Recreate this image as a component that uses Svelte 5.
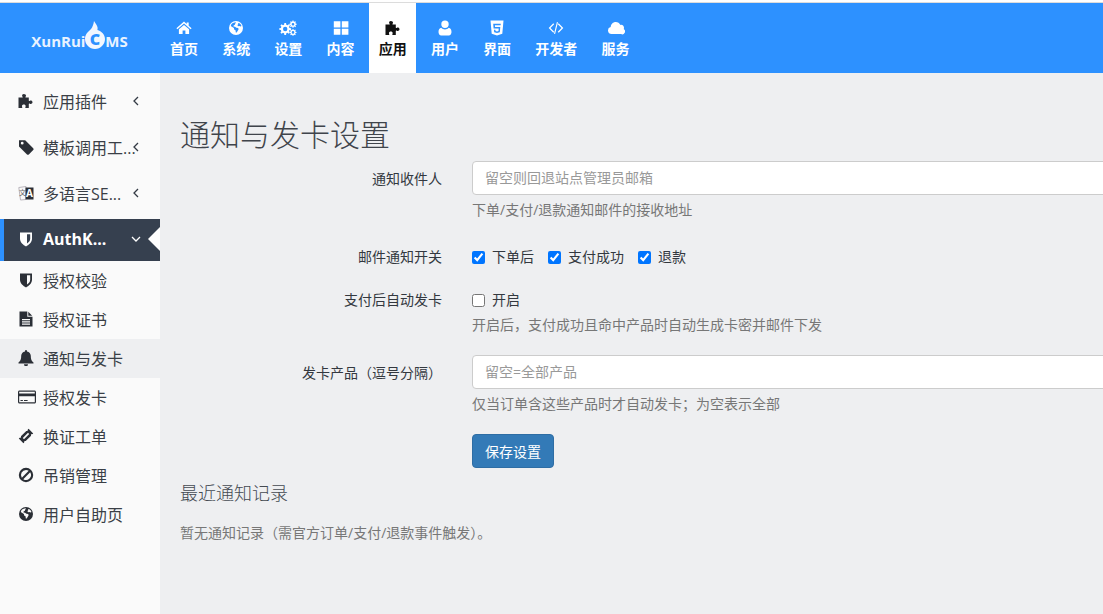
<script lang="ts">
  // builds a gear outline with a round hole, used for the settings icon
  function gear(cx: number, cy: number, r: number, teeth: number, hole: number) {
    let d = ''
    const step = (Math.PI * 2) / teeth
    for (let i = 0; i < teeth; i++) {
      const a = i * step
      const pts = [
        [a - step * 0.32, r * 0.74],
        [a - step * 0.18, r],
        [a + step * 0.18, r],
        [a + step * 0.32, r * 0.74],
      ]
      for (const [t, l] of pts) {
        d += `${i === 0 && t === pts[0][0] ? 'M' : 'L'}${(cx + Math.cos(t) * l).toFixed(2)} ${(cy + Math.sin(t) * l).toFixed(2)}`
      }
    }
    d += `Z M${cx - hole} ${cy}a${hole} ${hole} 0 1 0 ${hole * 2} 0a${hole} ${hole} 0 1 0 ${-hole * 2} 0Z`
    return d
  }

  const icons: Record<string, string> = {
    home: 'M8 1.600 .4 8.200l1 1.100L8 3.600l6.600 5.700 1-1.100-2.900-2.500V2.400h-2v1.700ZM8 4.900 2.900 9.300V14H6.600v-3.400h2.800V14h3.700V9.300Z',
    globe: 'M8 1a7 7 0 1 0 0 14A7 7 0 0 0 8 1ZM4 3.600c1-.8 2.200-1.200 3.400-1.300l.7.8-1 .5-.2 1.200-1.300.6-.1 1.200 1.500.2 1.400.9 1.800.2.4 1.400-1 1.700-.9 1.600-.9-.2-.3-2.100-1.400-.9-.2-1.500L3.100 6.300 2.800 6C3 5 3.400 4.200 4 3.600ZM10.200 3l1.700.5c.8.7 1.300 1.600 1.600 2.600l-.9.4-1.300-.5-1.100.3-.9-1.200.8-.6Z',
    cogs: gear(6.2, 9, 6, 8, 2.200) + gear(14, 4.200, 3.700, 8, 1.300) + gear(14, 12.400, 3.500, 8, 1.300),
    grid: 'M.8 1.200h6.600v6.300H.8ZM8.800 1.200h6.600v6.300H8.800ZM.8 8.800h6.600v6H.8ZM8.800 8.800h6.600v6H8.800Z',
    puzzle: 'M5.800 1c1.400 0 2.200.8 2.200 1.700 0 .7-.6 1-.6 1.500 0 .3.3.4 1 .4h2.400v2.700c0 .6.2.8.5.8.5 0 .7-.5 1.400-.5.9 0 1.800.7 1.800 1.700s-.9 1.700-1.800 1.700c-.7 0-.9-.5-1.400-.5-.3 0-.5.2-.5.8V15H8c-.5 0-.7-.3-.7-.6 0-.5.4-.7.4-1.300 0-.9-.9-1.500-1.900-1.500s-1.900.6-1.900 1.500c0 .6.4.8.4 1.300 0 .3-.2.600-.7.600H.5V4.600h3.300c.7 0 1-.1 1-.4 0-.5-.7-.8-.7-1.500C4.100 1.800 4.600 1 5.800 1Z',
    user: 'M8 .6a3.700 3.700 0 1 1 0 7.400A3.700 3.700 0 0 1 8 .6ZM4.300 7.700C5.200 8.800 6.500 9.400 8 9.400s2.800-.6 3.700-1.700c1.700.2 2.800 1.700 2.800 4.300 0 1.900-1.100 3.400-2.700 3.400H4.200C2.600 15.400 1.500 13.900 1.500 12c0-2.600 1.100-4.100 2.800-4.300Z',
    html5: 'M1.500.6h13l-1.200 13.200L8 15.600l-5.300-1.800ZM11.800 3.700H4.200l.4 4.800h5.100l-.2 2.400L8 11.400l-1.500-.5-.1-1.200H5l.2 2.500L8 13l2.800-.8.5-5.100H6l-.1-1.900h5.700Z',
    code: 'M5.300 3.300 6.200 4.200 2.500 8l3.700 3.800-.9.9L.7 8ZM10.700 3.300 15.300 8l-4.600 4.700-.9-.9L13.500 8 9.800 4.200ZM8.900 2l1.100.3L7.100 14 6 13.700Z',
    cloud: 'M3.600 14a3.500 3.500 0 0 1-.9-6.900C2.800 4.200 5 2 7.800 2c2 0 3.800 1.100 4.500 2.900.3-.1.6-.1.800-.1 1.900 0 2.900 1.500 2.900 3 0 .5-.1.900-.3 1.300A2.800 2.800 0 0 1 13 14Z',
    tag: 'M1 1.200h6.200l8 8c.5.5.5 1.300 0 1.800l-4.400 4.400c-.5.5-1.300.5-1.800 0l-8-8ZM4.200 2.800a1.400 1.400 0 1 0 0 2.800 1.400 1.400 0 0 0 0-2.800Z',
    shield: 'M2 1.500h12v6.300c0 3.700-3.400 6.200-6 7.700-2.600-1.500-6-4-6-7.700ZM9 3.200v9.400c1.700-1.100 3.200-2.800 3.200-4.800V3.200Z',
    file: 'M1.500.5h7.800v5.200h5.200V15.500h-13ZM10.300.8l3.900 3.900h-3.900ZM4 8v1.300h8V8Zm0 2.300v1.300h8v-1.300Zm0 2.200v1.300h8v-1.300Z',
    bell: 'M8 0a1 1 0 0 1 1 1v.4c2.300.4 3.800 2.300 3.800 4.400 0 4.400 1.300 5.500 2.700 6.700v.9H.5v-.9c1.400-1.200 2.700-2.300 2.700-6.700 0-2.100 1.500-4 3.800-4.400V1a1 1 0 0 1 1-1ZM6 14.300h4a2 2 0 0 1-4 0Z',
    card: 'M1.500 1.500h15c.8 0 1.500.7 1.500 1.500v10c0 .8-.7 1.500-1.500 1.500h-15C.7 14.500 0 13.800 0 13V3c0-.8.7-1.500 1.500-1.500ZM1.200 2.700v1.800h15.600V2.700ZM1.200 7.200v6.100h15.600V7.200ZM2.500 11h2.400v1H2.500ZM6 11h3.600v1H6Z',
    ticket: 'M10.600.8 15.200 5.400 14.400 6.200C14 6 13.500 6.100 13.200 6.500S12.900 7.300 13.100 7.700L7.700 13.100C7.300 12.900 6.800 13 6.500 13.300S6 14 6.200 14.400L5.400 15.200.8 10.600 1.600 9.800C2 10 2.500 9.900 2.800 9.500S3.100 8.700 2.900 8.300L8.300 2.900C8.700 3.100 9.200 3 9.500 2.700S10 2 9.800 1.600ZM10 4.800 4.800 10 6 11.200 11.200 6Z',
    ban: 'M8 .8a7.200 7.200 0 1 0 0 14.400A7.200 7.200 0 0 0 8 .8ZM8 3c1 0 1.900.3 2.700.8l-6.900 6.900A5 5 0 0 1 8 3ZM12.200 5.300a5 5 0 0 1-6.900 6.900Z',
  }

  const wideIcons = ['card', 'cogs']

  const navItems = [
    { label: '首页', icon: 'home' },
    { label: '系统', icon: 'globe' },
    { label: '设置', icon: 'cogs' },
    { label: '内容', icon: 'grid' },
    { label: '应用', icon: 'puzzle', active: true },
    { label: '用户', icon: 'user' },
    { label: '界面', icon: 'html5' },
    { label: '开发者', icon: 'code' },
    { label: '服务', icon: 'cloud' },
  ]

  const subItems = [
    { label: '授权校验', icon: 'shield' },
    { label: '授权证书', icon: 'file' },
    { label: '通知与发卡', icon: 'bell', active: true },
    { label: '授权发卡', icon: 'card' },
    { label: '换证工单', icon: 'ticket' },
    { label: '吊销管理', icon: 'ban' },
    { label: '用户自助页', icon: 'globe' },
  ]
</script>

{#snippet icon(name: string)}
  <svg class="ico {name}" viewBox={wideIcons.includes(name) ? '0 0 18 16' : '0 0 16 16'} aria-hidden="true">
    <path fill-rule="evenodd" d={icons[name]} />
  </svg>
{/snippet}

{#snippet chevron(open = false)}
  <svg class="chev" viewBox="0 0 10 10" aria-hidden="true">
    <path d={open ? 'M1 3l4 4 4-4' : 'M7 1L3 5l4 4'} />
  </svg>
{/snippet}

<div class="page">
  <header class="top">
    <div class="logo">
      <span>XunRui</span>
      <svg class="flame" viewBox="0 0 20 28" aria-hidden="true">
        <path d="M9 0c1.500 2.500 3 4 3.500 6.200.2 1 .1 2-.1 2.700C16.500 9.900 20 13.500 20 18 20 23.500 15.500 28 10 28S0 23.500 0 18C0 13 3.500 10.500 6 8 7.500 6 8.500 3.500 9 0Z" />
        <text x="10" y="24" text-anchor="middle" class="flame-c">C</text>
      </svg>
      <span>MS</span>
    </div>
    <nav class="nav">
      {#each navItems as item}
        <a class="nav-item" class:active={item.active} href="#top">
          {@render icon(item.icon)}
          <span>{item.label}</span>
        </a>
      {/each}
    </nav>
  </header>

  <div class="body">
    <aside class="side">
      <a class="row" href="#top">
        {@render icon('puzzle')}
        <span class="name">应用插件</span>
        {@render chevron()}
      </a>
      <a class="row" href="#top">
        {@render icon('tag')}
        <span class="name">模板调用工...</span>
        {@render chevron()}
      </a>
      <a class="row" href="#top">
        <svg class="ico" viewBox="0 0 16 16" aria-hidden="true">
          <path d="M.8 2.500 8 1.500V14.500L2.500 15Z" fill="none" stroke="#b9b5bc" />
          <text x="4.500" y="10" text-anchor="middle" class="lang-w">文</text>
          <path d="M7.500 2.500H15.500V14.500H7.500Z" />
          <text x="11.500" y="12" text-anchor="middle" class="lang-a">A</text>
        </svg>
        <span class="name">多语言SE...</span>
        {@render chevron()}
      </a>
      <a class="row open" href="#top">
        {@render icon('shield')}
        <span class="name">AuthK...</span>
        {@render chevron(true)}
      </a>
      {#each subItems as item}
        <a class="sub" class:active={item.active} href="#top">
          {@render icon(item.icon)}
          <span class="name">{item.label}</span>
        </a>
      {/each}
    </aside>

    <main class="main">
      <h1>通知与发卡设置</h1>

      <div class="field">
        <label for="recv">通知收件人</label>
        <div class="ctl">
          <input id="recv" type="text" placeholder="留空则回退站点管理员邮箱" />
          <p class="help">下单/支付/退款通知邮件的接收地址</p>
        </div>
      </div>

      <div class="field gap-a">
        <span class="lab">邮件通知开关</span>
        <div class="checks">
          <label><input type="checkbox" checked />下单后</label>
          <label><input type="checkbox" checked />支付成功</label>
          <label><input type="checkbox" checked />退款</label>
        </div>
      </div>

      <div class="field gap-b">
        <span class="lab">支付后自动发卡</span>
        <div class="ctl">
          <div class="checks">
            <label><input type="checkbox" />开启</label>
          </div>
          <p class="help">开启后，支付成功且命中产品时自动生成卡密并邮件下发</p>
        </div>
      </div>

      <div class="field gap-c">
        <label for="prod">发卡产品（逗号分隔）</label>
        <div class="ctl">
          <input id="prod" type="text" placeholder="留空=全部产品" />
          <p class="help">仅当订单含这些产品时才自动发卡；为空表示全部</p>
        </div>
      </div>

      <div class="field gap-c">
        <span></span>
        <div><button type="button">保存设置</button></div>
      </div>

      <h2>最近通知记录</h2>
      <p class="empty">暂无通知记录（需官方订单/支付/退款事件触发）。</p>
    </main>
  </div>
</div>

<style>
  :global(body) {
    background: #fff;
    overflow: hidden;
  }

  .page {
    height: 614px;
    display: flex;
    flex-direction: column;
    padding-top: 2px;
    box-sizing: border-box;
    font-family: "Open Sans", "Noto Sans CJK SC", sans-serif;
    font-size: 14px;
    color: #3b4046;
  }

  a {
    text-decoration: none;
    color: inherit;
  }

  .top {
    height: 71px;
    box-sizing: border-box;
    border-top: 1px solid #dcdcdc;
    background: #2d91ff;
    display: flex;
    flex: none;
  }

  .logo {
    width: 160px;
    flex: none;
    display: flex;
    align-items: center;
    justify-content: center;
    color: #e9f3ff;
    font-size: 15px;
    font-weight: 700;
    position: relative;
    top: 3px;
    padding-right: 1px;
    box-sizing: border-box;
  }

  .flame {
    width: 20px;
    height: 28px;
    margin: -12px 0 0;
    fill: #f2f7ff;
    overflow: visible;
  }

  .flame-c {
    font-size: 16px;
    font-weight: 800;
    fill: #2d91ff;
    font-family: "Open Sans", sans-serif;
  }

  .nav {
    display: flex;
    gap: 5.200px;
    margin-left: .5px;
  }

  .nav-item {
    padding: 17px 9.500px 0;
    display: flex;
    flex-direction: column;
    align-items: center;
    color: #fff;
    font-weight: 700;
    line-height: 20px;
    box-sizing: border-box;
  }

  .nav-item .ico {
    margin-bottom: 3px;
    fill: #fff;
  }

  .nav-item .cloud {
    width: 18px;
  }

  .nav-item.active {
    background: #fff;
    color: #111;
  }

  .nav-item.active .ico {
    fill: #111;
  }

  .body {
    flex: 1;
    display: flex;
    min-height: 0;
  }

  .side {
    width: 160px;
    flex: none;
    background: #fafafa;
    padding-top: 5px;
    box-sizing: border-box;
  }

  .row,
  .sub {
    display: flex;
    align-items: center;
    font-size: 16px;
    position: relative;
    box-sizing: border-box;
    padding-left: 18px;
    color: #3a3f46;
  }

  .row {
    height: 46px;
  }

  .sub {
    height: 38.900px;
  }

  .sub.active {
    background: #eeeff1;
  }

  .ico {
    width: 16px;
    height: 16px;
    fill: #2b2f36;
    flex: none;
  }

  .ico.card,
  .ico.cogs {
    width: 18px;
  }

  .side .ico.card {
    margin: 0 -1.500px 0 -.5px;
  }

  .name {
    margin-left: 9px;
    white-space: nowrap;
  }

  .lang-a {
    font-size: 10px;
    font-weight: 700;
    fill: #fff;
  }

  .lang-w {
    font-size: 7px;
    fill: #666;
  }

  .chev {
    position: absolute;
    left: 131px;
    top: 50%;
    margin-top: -5px;
    width: 10px;
    height: 10px;
    fill: none;
    stroke: #333a44;
    stroke-width: 1.300;
  }

  .row.open {
    height: 42px;
    margin-top: 3px;
    padding: 0 0 2px 14px;
    background: #36404f;
    color: #fff;
    font-weight: 700;
    border-left: 4px solid #2d91ff;
  }

  .row.open .ico {
    fill: #fff;
  }

  .row.open .chev {
    left: 127px;
    margin-top: -6px;
    stroke: #fff;
  }

  /* notch that points at the page */
  .row.open::after {
    content: "";
    position: absolute;
    right: 0;
    top: 50%;
    margin-top: -13px;
    border: 12px solid transparent;
    border-right-color: #fff;
    border-left: 0;
  }

  .main {
    flex: 1;
    min-width: 0;
    overflow: hidden;
    background: #eeeff1;
    padding: 40px 0 0 20px;
    box-sizing: border-box;
  }

  h1 {
    margin: 0 0 4px;
    font-size: 30px;
    line-height: 44px;
    font-weight: 300;
    color: #3f444b;
  }

  .field {
    display: grid;
    grid-template-columns: 262px 800px;
    column-gap: 30px;
  }

  .field > label,
  .lab {
    text-align: right;
    line-height: 20px;
    color: #33383f;
  }

  .field > label {
    padding-top: 8px;
  }

  .gap-a {
    margin-top: 27px;
  }

  .gap-b {
    margin-top: 23px;
  }

  .gap-c {
    margin-top: 20px;
  }

  input[type="text"] {
    display: block;
    width: 100%;
    height: 34px;
    box-sizing: border-box;
    padding: 0 12px 1px;
    font: inherit;
    background: #fff;
    border: 1px solid #ccc;
    border-radius: 4px;
    color: #333;
  }

  input::placeholder {
    color: #999;
    opacity: 1;
  }

  .help {
    margin: 5px 0 0;
    line-height: 20px;
    color: #777;
  }

  .checks {
    display: flex;
    gap: 14px;
    line-height: 20px;
  }

  .checks label {
    display: flex;
    align-items: center;
    gap: 7px;
    color: #33383f;
  }

  .checks input {
    margin: 0;
    width: 13px;
    height: 13px;
  }

  button {
    height: 34px;
    padding: 0 12px;
    font: inherit;
    color: #fff;
    background: #337ab7;
    border: 1px solid #2e6da4;
    border-radius: 4px;
  }

  h2 {
    margin: 12px 0 0;
    font-size: 18px;
    line-height: 26px;
    font-weight: 300;
    color: #444a51;
  }

  .empty {
    margin: 17px 0 0;
    line-height: 20px;
    color: #777;
  }
</style>
